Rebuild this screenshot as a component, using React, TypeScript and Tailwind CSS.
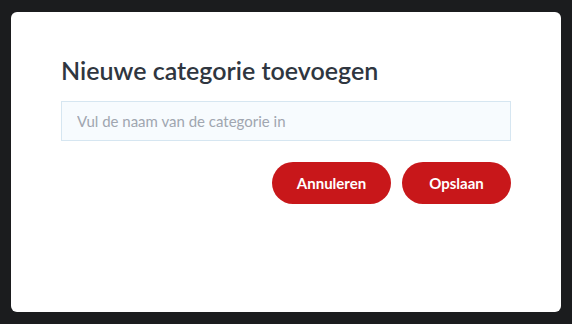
export default function App() {
  return (
    <div className="min-h-screen w-full bg-[#1b1c1e] pt-[12px] px-[11px] font-['Lato','Noto_Sans',sans-serif]">
      <div className="h-[300px] rounded-[6px] bg-white pl-[50px] pr-[50px] pt-[40px]">
        <h2 className="text-[25px] leading-[36px] font-semibold text-[#2f3640]">
          Nieuwe categorie toevoegen
        </h2>
        <input
          type="text"
          placeholder="Vul de naam van de categorie in"
          className="mt-[13px] h-[40px] w-full border border-[#d6e6f1] bg-[#f7fbfe] px-[15px] text-[15px] text-[#2f3640] outline-none placeholder:text-[#a0a6b0]"
        />
        <div className="mt-[21px] flex justify-end gap-[11px]">
          <button className="h-[42px] w-[119px] rounded-full bg-[#c8171a] text-[15px] font-bold text-white">
            Annuleren
          </button>
          <button className="h-[42px] w-[109px] rounded-full bg-[#c8171a] text-[15px] font-bold text-white">
            Opslaan
          </button>
        </div>
      </div>
    </div>
  );
}
